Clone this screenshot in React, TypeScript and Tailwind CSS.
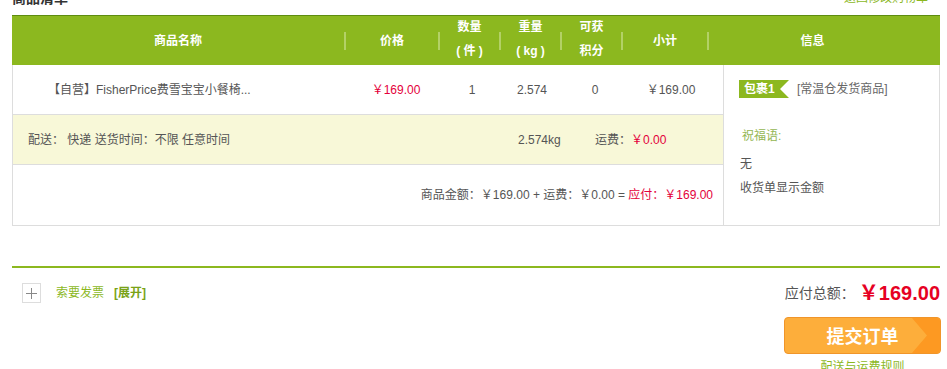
const font = "font-['Liberation_Sans','Noto_Sans_CJK_SC',sans-serif]";

const HeaderSep = () => <div className="w-[2px] h-[18px] bg-[#b3d166]" />;

const TableHeader = () => (
  <div className="flex items-center h-[50px] bg-[#8cb81f] border-t border-[#5e8c10] text-white text-[12px] font-bold text-center">
    <div className="w-[332px]">商品名称</div>
    <HeaderSep />
    <div className="w-[92px]">价格</div>
    <HeaderSep />
    <div className="w-[59px] leading-[24px] pb-[3px]">
      <div>数量</div>
      <div className="whitespace-pre">( 件 )</div>
    </div>
    <HeaderSep />
    <div className="w-[59px] leading-[24px] pb-[3px]">
      <div>重量</div>
      <div className="whitespace-pre">( kg )</div>
    </div>
    <HeaderSep />
    <div className="w-[59px] leading-[24px] pb-[3px]">
      <div>可获</div>
      <div>积分</div>
    </div>
    <HeaderSep />
    <div className="w-[84px]">小计</div>
    <HeaderSep />
    <div className="w-[207px]">信息</div>
  </div>
);

const PackageBadge = () => (
  <div className="relative w-[50px] h-[18px]">
    <svg width="50" height="18" viewBox="0 0 50 18" className="absolute inset-0">
      <polygon points="0,0 50,0 41,9 50,18 0,18" fill="#8cb81f" />
    </svg>
    <span className="relative pl-[5px] leading-[18px] text-white font-bold text-[12px]">包裹1</span>
  </div>
);

const OrderTable = () => (
  <div>
    <TableHeader />
    <div className="flex border-x border-b border-[#dddddd] text-[12px] text-[#555555]">
      <div className="w-[710px] flex flex-col">
        <div className="flex items-center h-[50px] border-b border-[#dddddd]">
          <div className="w-[336px] pl-[35px]">【自营】FisherPrice费雪宝宝小餐椅...</div>
          <div className="w-[94px] text-center text-[#e4003b]">￥169.00</div>
          <div className="w-[58px] text-center">1</div>
          <div className="w-[62px] text-center">2.574</div>
          <div className="w-[64px] text-center">0</div>
          <div className="w-[88px] text-center">￥169.00</div>
        </div>
        <div className="flex items-center h-[50px] bg-[#f8f8d8] border-b border-[#dddddd]">
          <div className="w-[505px] pl-[15px]">配送： 快递 送货时间：不限 任意时间</div>
          <div className="w-[77px]">2.574kg</div>
          <div className="flex-1">
            运费：<span className="text-[#e4003b]">￥0.00</span>
          </div>
        </div>
        <div className="flex items-center justify-end h-[60px] pr-[10px] whitespace-pre">
          商品金额：￥169.00 + 运费：￥0.00 = <span className="text-[#e4003b]">应付：￥169.00</span>
        </div>
      </div>
      <div className="flex-1 border-l border-[#dddddd] pl-[15px] pt-[15px]">
        <div className="flex items-center gap-[8px]">
          <PackageBadge />
          <span className="text-[#666666]">[常温仓发货商品]</span>
        </div>
        <div className="mt-[26px] pl-[3px] text-[#94b652] leading-[24px]">祝福语:</div>
        <div className="mt-[4px] pl-[1px] leading-[24px]">无</div>
        <div className="pl-[1px] leading-[24px]">收货单显示金额</div>
      </div>
    </div>
  </div>
);

const SubmitButton = () => (
  <button className="relative w-[157px] h-[37px] rounded-[4px] border border-[#f0952a] bg-[#fdae3b] overflow-hidden">
    <svg width="28" height="35" viewBox="0 0 28 35" className="absolute right-0 top-0">
      <polygon points="0,0 28,0 28,35 0,35 15,17.5" fill="#fd9922" />
    </svg>
    <span className="relative text-white font-bold text-[18px] leading-[35px] font-['Noto_Sans_CJK_SC',sans-serif]">提交订单</span>
  </button>
);

const OrderFooter = () => (
  <div className="mt-[40px] border-t-2 border-[#8cb81f] flex justify-between">
    <div className="flex items-center pl-[10px] pt-[10px] h-[30px] box-content text-[12px]">
      <div className="w-[19px] h-[20px] border border-[#dddddd] flex items-center justify-center">
        <svg width="11" height="11" viewBox="0 0 11 11">
          <path d="M5.5 0v11M0 5.5h11" stroke="#888888" strokeWidth="1" />
        </svg>
      </div>
      <span className="ml-[15px] text-[#8cb81f]">索要发票</span>
      <span className="ml-[10px] text-[#7aa317] font-bold">[展开]</span>
    </div>
    <div className="w-[157px] -mr-[1px] flex flex-col items-center pt-[12px]">
      <div className="self-end mr-[1px] flex items-center h-[26px] whitespace-nowrap">
        <span className="text-[14px] text-[#555555]">应付总额：</span>
        <span className="ml-[4px] text-[20px] font-bold text-[#e60023]">￥169.00</span>
      </div>
      <div className="mt-[11px]">
        <SubmitButton />
      </div>
      <a className="mt-[4px] text-[12px] text-[#8cb81f]">配送与运费规则</a>
    </div>
  </div>
);

export default function App() {
  return (
    <div className={`w-[947px] h-[369px] overflow-hidden bg-white ${font}`}>
      <div className="mx-[12px] w-[928px] -mt-[12px]">
        <div className="flex justify-between items-end h-[20px] mb-[7px]">
          <span className="text-[14px] font-bold text-[#333333] leading-[20px]">商品清单</span>
          <a className="text-[12px] text-[#8cb81f] leading-[20px] mr-[12px]">返回修改购物车</a>
        </div>
        <OrderTable />
        <OrderFooter />
      </div>
    </div>
  );
}
